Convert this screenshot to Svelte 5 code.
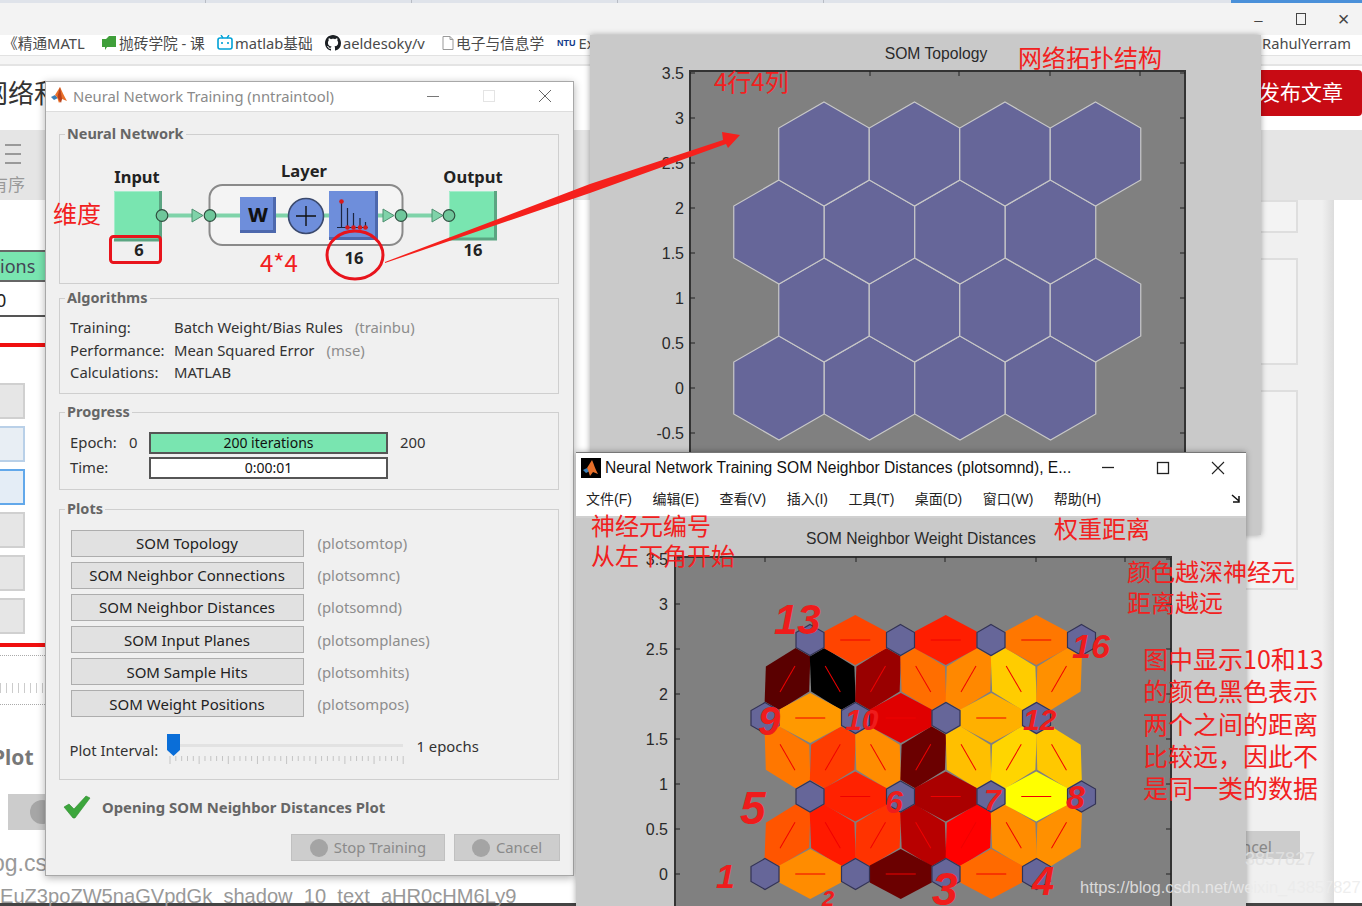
<script>
  const TOPO_ROWS = [
    { x: 779, y: 388 },
    { x: 824, y: 310 },
    { x: 779, y: 232 },
    { x: 824, y: 154 }
  ];
  const topoHexes = TOPO_ROWS.flatMap((r) => [0, 1, 2, 3].map((i) => ({ x: r.x + i * 90.5, y: r.y })));

  // neurons numbered from the lower left, as in plotsomnd
  const neurons = [
    { x: 765, y: 873 },
    { x: 810, y: 795.5 },
    { x: 765, y: 717 },
    { x: 810, y: 639 }
  ].flatMap((r) => [0, 1, 2, 3].map((i) => ({ x: r.x + i * 90.5, y: r.y })));

  const links = [
    [1, 5, '#ff5500'], [5, 2, '#ff1a00'], [2, 6, '#ff3300'], [6, 3, '#b80000'],
    [3, 7, '#ff0000'], [7, 4, '#ff8c00'], [4, 8, '#ff9000'],
    [9, 5, '#ff7700'], [5, 10, '#ff3c00'], [10, 6, '#ff8c00'], [6, 11, '#6b0000'],
    [11, 7, '#ffbf00'], [7, 12, '#ffd500'], [12, 8, '#ffc800'],
    [9, 13, '#5a0000'], [13, 10, '#000000'], [10, 14, '#990000'], [14, 11, '#ff6e00'],
    [11, 15, '#ff8800'], [15, 12, '#ffcc00'], [12, 16, '#ff9000'],
    [1, 2, '#ff8c00'], [2, 3, '#6b0000'], [3, 4, '#ff6a00'],
    [5, 6, '#ff2200'], [6, 7, '#aa0000'], [7, 8, '#ffff00'],
    [9, 10, '#ff9900'], [10, 11, '#e00000'], [11, 12, '#ffb000'],
    [13, 14, '#ff4400'], [14, 15, '#ff1e00'], [15, 16, '#ff7700']
  ].map(([a, b, color]) => {
    const p = neurons[a - 1];
    const q = neurons[b - 1];
    return {
      x: (p.x + q.x) / 2,
      y: (p.y + q.y) / 2,
      angle: (Math.atan2(q.y - p.y, q.x - p.x) * 180) / Math.PI,
      color
    };
  });

  const hex = (hw, hh, sh) =>
    `0,${-hh} ${hw},${-sh} ${hw},${sh} 0,${hh} ${-hw},${sh} ${-hw},${-sh}`;

  const topoTicks = ['3.5', '3', '2.5', '2', '1.5', '1', '0.5', '0', '-0.5'];
  const distTicks = ['3.5', '3', '2.5', '2', '1.5', '1', '0.5', '0'];

  const bookmarks = [
    { text: '《精通MATL', w: 98 },
    { icon: 'book', text: '抛砖学院 - 课', w: 116 },
    { icon: 'tv', text: 'matlab基础', w: 108 },
    { icon: 'git', text: 'aeldesoky/v', w: 117 },
    { icon: 'doc', text: '电子与信息学', w: 115 },
    { icon: 'ntu', text: 'Ex', w: 40 }
  ];

  const plots = [
    ['SOM Topology', 'plotsomtop'],
    ['SOM Neighbor Connections', 'plotsomnc'],
    ['SOM Neighbor Distances', 'plotsomnd'],
    ['SOM Input Planes', 'plotsomplanes'],
    ['SOM Sample Hits', 'plotsomhits'],
    ['SOM Weight Positions', 'plotsompos']
  ];

  const menu = ['文件(F)', '编辑(E)', '查看(V)', '插入(I)', '工具(T)', '桌面(D)', '窗口(W)', '帮助(H)'];

  const sliderTicks = Array.from({ length: 41 }, (_, i) => 170 + i * 5.83);

  const notes = [
    { x: 714, y: 91, t: '4行4列' },
    { x: 1018, y: 67, t: '网络拓扑结构' },
    { x: 53, y: 223, t: '维度' },
    { x: 260, y: 272, t: '4*4' },
    { x: 591, y: 535, t: '神经元编号' },
    { x: 591, y: 565, t: '从左下角开始' },
    { x: 1054, y: 538, t: '权重距离' },
    { x: 1127, y: 581, t: '颜色越深神经元' },
    { x: 1127, y: 612, t: '距离越远' }
  ];

  const bigNotes = [
    { x: 1143, y: 669, t: '图中显示10和13' },
    { x: 1143, y: 701, t: '的颜色黑色表示' },
    { x: 1143, y: 734, t: '两个之间的距离' },
    { x: 1143, y: 766, t: '比较远，因此不' },
    { x: 1143, y: 798, t: '是同一类的数据' }
  ];

  const scrawls = [
    { x: 774, y: 634, s: 42, t: '13' },
    { x: 1072, y: 658, s: 34, t: '16' },
    { x: 758, y: 735, s: 40, t: '9' },
    { x: 845, y: 730, s: 30, t: '10' },
    { x: 1023, y: 730, s: 30, t: '12' },
    { x: 740, y: 824, s: 46, t: '5' },
    { x: 885, y: 813, s: 32, t: '6' },
    { x: 984, y: 810, s: 30, t: '7' },
    { x: 1066, y: 809, s: 34, t: '8' },
    { x: 716, y: 888, s: 34, t: '1' },
    { x: 822, y: 906, s: 22, t: '2' },
    { x: 932, y: 905, s: 46, t: '3' },
    { x: 1032, y: 895, s: 40, t: '4' }
  ];
</script>

<div class="desktop">
  <div class="page">
    <div class="tabs"><span class="tab"></span><span class="tab"></span><span class="tab"></span><span class="tab"></span><span class="tab active"></span></div>
    <div class="chrome">
      <span class="ctl">–</span>
      <span class="ctl square"></span>
      <span class="ctl close">×</span>
    </div>
    <div class="bookmarks">
      {#each bookmarks as b}
        <span class="bookmark" style="width: {b.w}px">
          {#if b.icon === 'book'}
            <svg width="16" height="14" viewBox="0 0 16 14"><path d="M1 3h4l3-3h7v11H6l-2 3V11H1z" fill="#3f9f3a" /></svg>
          {:else if b.icon === 'tv'}
            <svg width="16" height="16" viewBox="0 0 16 16"><path d="M4 0l2 3M12 0l-2 3" stroke="#00a1d6" stroke-width="1.4" /><rect x="1" y="3" width="14" height="11" rx="2" fill="none" stroke="#00a1d6" stroke-width="1.6" /><path d="M5 7v2M11 7v2" stroke="#00a1d6" stroke-width="1.6" /></svg>
          {:else if b.icon === 'git'}
            <svg width="16" height="16" viewBox="0 0 16 16"><path fill="#1b1f23" d="M8 0C3.58 0 0 3.58 0 8c0 3.54 2.29 6.53 5.47 7.59.4.07.55-.17.55-.38 0-.19-.01-.82-.01-1.49-2.01.37-2.53-.49-2.69-.94-.09-.23-.48-.94-.82-1.13-.28-.15-.68-.52-.01-.53.63-.01 1.08.58 1.23.82.72 1.21 1.87.87 2.33.66.07-.52.28-.87.51-1.07-1.78-.2-3.64-.89-3.64-3.95 0-.87.31-1.59.82-2.15-.08-.2-.36-1.02.08-2.12 0 0 .67-.21 2.2.82.64-.18 1.32-.27 2-.27.68 0 1.36.09 2 .27 1.53-1.04 2.2-.82 2.2-.82.44 1.1.16 1.92.08 2.12.51.56.82 1.27.82 2.15 0 3.07-1.87 3.75-3.65 3.95.29.25.54.73.54 1.48 0 1.07-.01 1.93-.01 2.2 0 .21.15.46.55.38A8.013 8.013 0 0016 8c0-4.42-3.58-8-8-8z" /></svg>
          {:else if b.icon === 'doc'}
            <svg width="12" height="14" viewBox="0 0 12 14"><path d="M1 .5h7l3 3v10H1zM8 .5v3h3" fill="#fff" stroke="#999" /></svg>
          {:else if b.icon === 'ntu'}
            <span class="ntu">NTU</span>
          {/if}
          {b.text}
        </span>
      {/each}
      <span class="bookmark-end">RahulYerram</span>
    </div>
    <div class="strip"></div>
    <div class="head">
      <span class="head-title">网络和</span>
      <span class="publish">发布文章</span>
    </div>
    <div class="toolbar">
      <div class="hamburger"><i></i><i></i><i></i></div>
      <span class="sort">有序</span>
    </div>
    <div class="content">
      <div class="left">
        <div class="tab-green">ions</div>
        <div class="num">0</div>
        <div class="red-line first"></div>
        <div class="stub"></div>
        <div class="stub light"></div>
        <div class="stub focus"></div>
        <div class="stub"></div>
        <div class="stub"></div>
        <div class="stub"></div>
        <div class="red-line second"></div>
        <div class="scale"><div class="scale-ticks"></div></div>
        <div class="plot-word">Plot</div>
        <div class="stub-btn"></div>
        <div class="url-word">og.cs</div>
      </div>
      <div class="mid"></div>
      <div class="side">
        <div class="box b1"></div>
        <div class="box b2"></div>
        <div class="box b3"></div>
        <div class="ghost-cancel">ncel</div>
      </div>
      <div class="gutter"></div>
    </div>
    <div class="long-url">EuZ3poZW5naGVpdGk_shadow_10_text_aHR0cHM6Ly9</div>
    <div class="bottom"></div>
  </div>

  <!-- SOM Topology figure -->
  <div class="figure topo">
    <svg width="671" height="500" viewBox="590 35 671 500">
      <text class="fig-title" x="936" y="59" text-anchor="middle">SOM Topology</text>
      <rect x="690" y="71" width="495" height="440" fill="#808080" stroke="#333" stroke-width="2" />
      {#each topoTicks as t, i}
        <text class="tick" x="684" y={79 + i * 45} text-anchor="end">{t}</text>
        <path d="M690 {73 + i * 45}h5M1185 {73 + i * 45}h-5" stroke="#222" />
      {/each}
      {#each [870, 959, 1050, 1140] as x}
        <path d="M{x} 71v5" stroke="#222" />
      {/each}
      {#each topoHexes as h}
        <polygon transform="translate({h.x} {h.y})" points={hex(45.25, 52, 26)} fill="#666699" stroke="#c8c8c8" stroke-width="1.2" />
      {/each}
    </svg>
  </div>

  <!-- nntraintool -->
  <div class="tool">
    <div class="tool-title">
      <svg width="20" height="20" viewBox="0 0 20 20">
        <path d="M1 11l4-2 3 3-4 2z" fill="#3b7fb8" />
        <path d="M5 9l5-8c2 4 4 9 7 14l-5-2-3 4-2-6z" fill="#e8702a" />
        <path d="M10 1c-1 5-3 9-2 11l3 5 1-4z" fill="#b8401a" />
      </svg>
      <span class="tool-name">Neural Network Training (nntraintool)</span>
      <span class="win-btn min"></span>
      <span class="win-btn max"></span>
      <span class="win-btn x">
        <svg width="14" height="14" viewBox="0 0 14 14"><path d="M1 1l12 12M13 1L1 13" stroke="#666" /></svg>
      </span>
    </div>

    <div class="group net">
      <span class="legend">Neural Network</span>
      <svg class="diagram" width="500" height="150" viewBox="59 134 500 150">
        <text class="node-label" x="137" y="182.5" text-anchor="middle">Input</text>
        <text class="node-label" x="304" y="177" text-anchor="middle">Layer</text>
        <text class="node-label" x="473" y="182.5" text-anchor="middle">Output</text>

        <rect x="209.5" y="185" width="193" height="60" rx="13" fill="#f4f4f4" stroke="#8a8a8a" stroke-width="2" />

        <path d="M168 215.5h26M212 215.5h118M378 215.5h8M405 215.5h30" stroke="#7fd3a9" stroke-width="4" />

        <rect x="114" y="191" width="48" height="49" fill="#79e5b0" />
        <path d="M114.5 240V191.5H161" fill="none" stroke="#a5eccb" />
        <path d="M160.5 191v49H114" fill="none" stroke="#5ba582" stroke-width="3" />
        <rect x="449" y="191" width="48" height="49" fill="#79e5b0" />
        <path d="M449.5 240V191.5H496" fill="none" stroke="#a5eccb" />
        <path d="M495.5 191v48H449" fill="none" stroke="#5ba582" stroke-width="3" />

        <rect x="240" y="197" width="36" height="36" fill="#6e8edb" />
        <path d="M274.5 197v34.5H240" fill="none" stroke="#4d68ad" stroke-width="3" />
        <text class="w" x="258" y="222" text-anchor="middle">W</text>

        <circle cx="306" cy="216" r="17.5" fill="#6e8edb" stroke="#3b4a6e" stroke-width="1.6" />
        <path d="M296 216h20M306 206v20" stroke="#111" stroke-width="1.4" />

        <rect x="329" y="191" width="49" height="49" fill="#6e8edb" />
        <path d="M376.5 191v47.5H329" fill="none" stroke="#4d68ad" stroke-width="3" />
        <path d="M341.5 202v26M347.5 208v20M353.5 213v15M360 218v10M365.5 222v6M337 227.5h31" stroke="#1c2540" stroke-width="1.2" />
        <circle cx="341.5" cy="201.5" r="2.3" fill="#d91a1a" />
        {#each [347.5, 353.5, 360, 365.5] as x}
          <circle cx={x} cy="227.5" r="2.3" fill="#d91a1a" />
        {/each}

        {#each [192, 383, 432] as x}
          <path d="M{x} 209l11 6.5-11 6.5z" fill="#7fd3a9" stroke="#4f8f70" />
        {/each}
        {#each [162, 210, 401, 449] as x}
          <circle cx={x} cy="215.5" r="5.8" fill="#6fc79b" stroke="#2f4f40" stroke-width="1.2" />
        {/each}

        <text class="size" x="139" y="256" text-anchor="middle">6</text>
        <text class="size" x="354" y="264" text-anchor="middle">16</text>
        <text class="size" x="473" y="256" text-anchor="middle">16</text>
      </svg>
    </div>

    <div class="group alg">
      <span class="legend">Algorithms</span>
      <div class="alg-row"><span>Training:</span><span>Batch Weight/Bias Rules<em>(trainbu)</em></span></div>
      <div class="alg-row"><span>Performance:</span><span>Mean Squared Error<em>(mse)</em></span></div>
      <div class="alg-row"><span>Calculations:</span><span>MATLAB</span></div>
    </div>

    <div class="group prog">
      <span class="legend">Progress</span>
      <div class="prog-row">
        <span>Epoch:</span><span>0</span>
        <div class="bar filled">200 iterations</div>
        <span class="prog-end">200</span>
      </div>
      <div class="prog-row">
        <span>Time:</span><span></span>
        <div class="bar">0:00:01</div>
      </div>
    </div>

    <div class="group plots">
      <span class="legend">Plots</span>
      <div class="plot-list">
        {#each plots as [label, fn]}
          <div class="plot-row">
            <button class="plot-btn">{label}</button>
            <span class="hint">({fn})</span>
          </div>
        {/each}
      </div>
      <div class="interval">
        <span class="interval-label">Plot Interval:</span>
        <svg width="238" height="34" viewBox="167 733 238 34">
          <rect x="170" y="745" width="233" height="3" fill="#e2e2e2" />
          {#each sliderTicks as x, i}
            <path d="M{x} 757v{i % 5 === 0 ? 8 : 5}" stroke="#c4c4c4" />
          {/each}
          <path d="M167 735h13v16l-6.500 6-6.500-6z" fill="#0a6ed8" />
        </svg>
        <span class="epochs">1 epochs</span>
      </div>
    </div>

    <div class="status">
      <svg width="28" height="24" viewBox="0 0 28 24">
        <path d="M1 12l5-3 5 5L23 1l4 2-15 20h-2z" fill="#3ca63c" stroke="#2e8a2e" stroke-width=".6" />
      </svg>
      <span>Opening SOM Neighbor Distances Plot</span>
    </div>

    <div class="actions">
      <button class="action stop"><i class="dot"></i><span>Stop Training</span></button>
      <button class="action cancel"><i class="dot"></i><span>Cancel</span></button>
    </div>
  </div>

  <!-- SOM Neighbor Distances figure -->
  <div class="figure dist">
    <div class="dist-title">
      <svg width="20" height="20" viewBox="0 0 20 20">
        <rect width="20" height="20" fill="#000" />
        <path d="M2 12l4-2 3 3-4 2z" fill="#3b7fb8" />
        <path d="M6 10l5-8c2 4 3 9 6 14l-5-2-3 4-2-6z" fill="#e8702a" />
      </svg>
      <span class="dist-name">Neural Network Training SOM Neighbor Distances (plotsomnd), E...</span>
      <span class="dist-btn">
        <svg width="14" height="14" viewBox="0 0 14 14"><path d="M1 6.500h12" stroke="#222" stroke-width="1.300" /></svg>
      </span>
      <span class="dist-btn">
        <svg width="14" height="14" viewBox="0 0 14 14"><rect x="1.500" y="1.500" width="11" height="11" fill="none" stroke="#222" stroke-width="1.300" /></svg>
      </span>
      <span class="dist-btn">
        <svg width="14" height="14" viewBox="0 0 14 14"><path d="M1 1l12 12M13 1L1 13" stroke="#222" stroke-width="1.100" /></svg>
      </span>
    </div>
    <div class="menubar">
      {#each menu as m}<span>{m}</span>{/each}
      <svg class="dock" width="10" height="10" viewBox="0 0 10 10"><path d="M1 1l7 6M8 2v6H2" fill="none" stroke="#111" stroke-width="1.500" /></svg>
    </div>
    <svg class="dist-plot" width="670" height="390" viewBox="576 516 670 390">
      <text class="fig-title" x="921" y="543" text-anchor="middle">SOM Neighbor Weight Distances</text>
      <rect x="675" y="556" width="496" height="360" fill="#808080" stroke="#333" stroke-width="2" />
      {#each distTicks as t, i}
        <text class="tick" x="668" y={564 + i * 45} text-anchor="end">{t}</text>
        <path d="M675 {558 + i * 45}h5M1171 {558 + i * 45}h-5" stroke="#222" />
      {/each}
      {#each [765, 856, 945, 1036, 1125] as x}
        <path d="M{x} 556v5" stroke="#222" />
      {/each}
      {#each links as l}
        <g transform="translate({l.x} {l.y}) rotate({l.angle})">
          <polygon points={hex(31, 25, 8.5)} fill={l.color} />
          <line x1="-15" x2="15" stroke="#f00000" />
        </g>
      {/each}
      {#each neurons as n}
        <polygon transform="translate({n.x} {n.y})" points={hex(14, 15.5, 7.5)} fill="#666699" stroke="#333355" stroke-width="1.200" />
      {/each}
    </svg>
  </div>

  <!-- red notes drawn over the screenshot -->
  <svg class="overlay" width="1362" height="906" viewBox="0 0 1362 906">
    <polygon points="385,262 590,184 723,140 722,132 740,135 728,148 726,144 590,193 385,263" fill="#f5201c" />
    <rect x="110.500" y="236.500" width="50" height="26" rx="3" fill="none" stroke="#e8141c" stroke-width="3" />
    <ellipse cx="355" cy="255" rx="28" ry="24" fill="none" stroke="#e8141c" stroke-width="3" />
    {#each notes as n}
      <text class="note" x={n.x} y={n.y}>{n.t}</text>
    {/each}
    {#each bigNotes as n}
      <text class="note big" x={n.x} y={n.y}>{n.t}</text>
    {/each}
    {#each scrawls as s}
      <text class="scrawl" x={s.x} y={s.y} font-size={s.s}>{s.t}</text>
    {/each}
    <text class="mark faint" x="1245" y="865">3857827</text>
    <text class="mark" x="1080" y="893">https://blog.csdn.net/weixin_43857827</text>
  </svg>
</div>

<style>
  :global(body) {
    margin: 0;
    background: #fff;
  }

  .desktop {
    position: relative;
    width: 1362px;
    height: 906px;
    overflow: hidden;
    font-family: "Noto Sans", "Noto Sans CJK SC", sans-serif;
    color: #222;
  }

  /* browser behind the windows */
  .page {
    display: flex;
    flex-direction: column;
    height: 906px;
    background: #fff;
  }

  .tabs {
    display: flex;
    height: 3px;
    background: #dfe3ea;
  }

  .tab {
    width: 205px;
    border-right: 1px solid #b8bcc4;
  }

  .tab.active {
    margin-left: auto;
    width: 131px;
    border: 0;
    background: #4a90d9;
  }

  .chrome {
    display: flex;
    justify-content: flex-end;
    align-items: center;
    gap: 29px;
    height: 32px;
    padding-right: 12px;
    background: #f3f3f3;
  }

  .ctl {
    width: 13px;
    text-align: center;
    font: 15px/1 "Liberation Sans", sans-serif;
    color: #444;
  }

  .ctl.square {
    width: 8px;
    height: 10px;
    border: 1.500px solid #444;
    margin: 0 2px;
  }

  .ctl.close {
    font-size: 20px;
  }

  .bookmarks {
    display: flex;
    align-items: center;
    box-sizing: border-box;
    height: 21px;
    padding: 0 0 5px 3px;
    border-bottom: 1px solid #e2e2e2;
    font-size: 14.700px;
    color: #4a4a4a;
    white-space: nowrap;
  }

  .bookmark {
    display: flex;
    align-items: center;
    gap: 2px;
    overflow: hidden;
  }

  .ntu {
    font: bold 9px "Liberation Sans", sans-serif;
    color: #123a8a;
    margin-right: 1px;
  }

  .bookmark-end {
    margin-left: auto;
    padding-right: 11px;
  }

  .strip {
    height: 8px;
    background: #f5f5f5;
    border-bottom: 2px solid #e4e4e4;
  }

  .head {
    display: flex;
    justify-content: space-between;
    align-items: flex-start;
    height: 64px;
    background: #fff;
  }

  .head-title {
    margin: 5px 0 0 -18px;
    font-size: 26px;
    line-height: 44px;
    color: #333;
  }

  .publish {
    box-sizing: border-box;
    width: 122px;
    height: 46px;
    margin-top: 4px;
    padding-left: 19px;
    background: #c80b14;
    border-radius: 4px;
    color: #fff;
    font-size: 21px;
    line-height: 45px;
  }

  .toolbar {
    box-sizing: border-box;
    height: 70px;
    padding: 14px 0 0 5px;
    background: #e5e5e5;
  }

  .hamburger i {
    display: block;
    width: 16px;
    height: 2px;
    margin-bottom: 7px;
    background: #999;
  }

  .sort {
    display: block;
    margin: 3px 0 0 -14px;
    font-size: 17px;
    color: #999;
  }

  .content {
    flex: 1;
    display: flex;
    min-height: 0;
  }

  .left {
    width: 45px;
    overflow: hidden;
    background: #fff;
  }

  .tab-green {
    margin-top: 50px;
    height: 28px;
    border-top: 2px solid #666;
    border-bottom: 2px solid #666;
    background: #79e5b0;
    color: #445;
    font-size: 18px;
    line-height: 28px;
  }

  .num {
    height: 30px;
    margin-top: 3px;
    border-bottom: 2px solid #555;
    font-size: 18px;
    line-height: 30px;
    margin-left: -4px;
  }

  .red-line {
    height: 4px;
    background: #f01010;
  }

  .red-line.first {
    margin: 26px 0 36px;
  }

  .red-line.second {
    margin-top: 9px;
  }

  .stub {
    box-sizing: border-box;
    width: 25px;
    height: 36px;
    margin-bottom: 7px;
    border: 2px solid #d0d0d0;
    border-left: 0;
    background: #e6e6e6;
  }

  .stub.light {
    border-color: #b9d0e8;
    background: #e8eef4;
  }

  .stub.focus {
    border-color: #62a8ea;
    background: #e4edf6;
  }

  .scale {
    box-sizing: border-box;
    height: 50px;
    margin-top: 8px;
    padding-top: 27px;
    border-top: 1px dotted #aaa;
    border-bottom: 1px dotted #aaa;
  }

  .scale-ticks {
    height: 10px;
    background: repeating-linear-gradient(90deg, #ccc 0 1px, transparent 1px 6px);
  }

  .plot-word {
    margin: 39px 0 0 -8px;
    font: bold 21px/26px "Noto Sans", sans-serif;
    color: #777;
  }

  .stub-btn {
    position: relative;
    width: 37px;
    height: 36px;
    margin: 24px 0 18px 8px;
    background: #ccc;
    overflow: hidden;
  }

  .stub-btn::after {
    content: "";
    position: absolute;
    left: 22px;
    top: 6px;
    width: 24px;
    height: 24px;
    border-radius: 50%;
    background: #a6a6a6;
  }

  .url-word {
    font: 23px/30px "Liberation Sans", sans-serif;
    color: #999;
    margin-left: -8px;
  }

  .mid {
    flex: 1;
  }

  .side {
    box-sizing: border-box;
    width: 222px;
    padding-top: 0;
    background: #f0f0f0;
  }

  .box {
    width: 198px;
    background: #f3f3f3;
    border: 2px solid #dedede;
    border-left: 0;
    box-sizing: border-box;
  }

  .b1 { height: 33px; }
  .b2 { height: 107px; margin-top: 25px; }
  .b3 { height: 200px; margin-top: 25px; }

  .ghost-cancel {
    box-sizing: border-box;
    width: 200px;
    height: 28px;
    margin-top: 241px;
    padding-right: 28px;
    background: #ccc;
    color: #888;
    text-align: right;
    font-size: 16px;
    line-height: 32px;
  }

  .gutter {
    width: 12px;
    margin-right: 28px;
    background: linear-gradient(90deg, #f0f0f0, #dcdcdc);
  }

  .long-url {
    position: absolute;
    left: 0;
    top: 884px;
    width: 530px;
    overflow: hidden;
    white-space: nowrap;
    font: 20.100px/24px "Liberation Sans", sans-serif;
    color: #999;
  }

  .bottom {
    height: 3px;
    background: #444;
  }

  /* matlab figures */
  .figure {
    position: absolute;
    background: #c9c9c9;
    box-shadow: 0 0 6px rgba(0, 0, 0, 0.35);
  }

  .figure svg {
    display: block;
  }

  .topo {
    left: 590px;
    top: 35px;
    width: 671px;
    height: 500px;
  }

  .fig-title,
  .tick {
    font-family: "Liberation Sans", sans-serif;
    fill: #2a2a2a;
  }

  .fig-title {
    font-size: 15.700px;
  }

  .tick {
    font-size: 16px;
  }

  .dist {
    left: 576px;
    top: 452px;
    width: 670px;
    height: 454px;
    border-top: 1px solid #777;
    box-sizing: border-box;
  }

  .dist-title {
    display: flex;
    align-items: center;
    box-sizing: border-box;
    height: 30px;
    padding: 0 0 0 5px;
    background: #fff;
  }

  .dist-name {
    flex: 1;
    margin-left: 4px;
    font: 15.600px "Liberation Sans", sans-serif;
    color: #111;
    white-space: nowrap;
  }

  .dist-btn {
    display: flex;
    justify-content: center;
    width: 56px;
    margin-left: -1px;
  }

  .dist-btn svg {
    display: block;
  }

  .menubar {
    display: flex;
    align-items: center;
    gap: 20.500px;
    position: relative;
    box-sizing: content-box;
    height: 29px;
    padding: 0 0 4px 10px;
    background: #fff;
    border-bottom: 2px solid #d0d0d0;
    font: 14px "Liberation Sans", "Noto Sans CJK SC", sans-serif;
    color: #222;
  }

  .dock {
    position: absolute;
    right: 5px;
    top: 11px;
  }

  .dist-plot {
    margin-top: -1px;
  }

  /* nntraintool */
  .tool {
    position: absolute;
    left: 45px;
    top: 81px;
    box-sizing: border-box;
    width: 529px;
    height: 795px;
    background: #f0f0f0;
    border: 1px solid #a8a8a8;
    box-shadow: 0 2px 8px rgba(0, 0, 0, 0.3);
    font-size: 14.850px;
    color: #333;
  }

  .tool-title {
    display: flex;
    align-items: center;
    box-sizing: border-box;
    height: 30px;
    padding: 0 0 1px 4px;
    background: #fff;
    border-bottom: 1px solid #ddd;
  }

  .tool-name {
    flex: 1;
    margin-left: 3px;
    color: #8a8a8a;
    white-space: nowrap;
    font-size: 14.800px;
  }

  .win-btn {
    display: flex;
    justify-content: center;
    align-items: center;
    width: 56px;
  }

  .win-btn.min::before {
    content: "";
    width: 12px;
    height: 1px;
    background: #777;
  }

  .win-btn.max::before {
    content: "";
    width: 10px;
    height: 10px;
    border: 1px solid #e4e4e4;
  }

  .win-btn.x svg {
    display: block;
  }

  .group {
    position: relative;
    box-sizing: border-box;
    width: 500px;
    margin-left: 13px;
    border: 1.500px solid #cfcfcf;
  }

  .legend {
    position: absolute;
    left: 5px;
    top: -12px;
    padding: 0 2px;
    background: #f0f0f0;
    font-weight: 700;
    font-size: 14.500px;
    line-height: 20px;
    color: #666;
  }

  .net {
    height: 150px;
    margin-top: 22px;
  }

  .diagram {
    display: block;
    margin: -1.500px;
  }

  .node-label,
  .size {
    font-family: "Noto Sans", sans-serif;
    font-weight: 700;
    font-size: 16.500px;
    fill: #222;
  }

  .w {
    font-family: "Noto Sans", sans-serif;
    font-weight: 800;
    font-size: 20px;
    fill: #111;
  }

  .alg {
    height: 96px;
    margin-top: 14px;
    padding: 17px 0 0 10px;
  }

  .alg-row {
    display: grid;
    grid-template-columns: 104px 1fr;
    line-height: 22.500px;
  }

  .alg-row em {
    margin-left: 12px;
    font-style: normal;
    color: #8d8d8d;
  }

  .prog {
    height: 78px;
    margin-top: 18px;
    padding: 19px 0 0 10px;
  }

  .prog-row {
    display: grid;
    grid-template-columns: 59px 20px 239px auto;
    align-items: center;
    height: 22px;
    margin-bottom: 3px;
  }

  .prog-row > span {
    margin-bottom: 2px;
  }

  .bar {
    box-sizing: border-box;
    height: 22px;
    border: 2px solid #555;
    background: #fff;
    text-align: center;
    font-size: 14px;
    line-height: 17px;
    color: #111;
  }

  .bar.filled {
    background: #79e5b0;
  }

  .prog-end {
    margin-left: 12px;
  }

  .plots {
    height: 271px;
    margin-top: 19px;
    padding: 19.500px 0 0 10.500px;
  }

  .plot-list {
    display: flex;
    flex-direction: column;
    gap: 5.200px;
  }

  .plot-row {
    display: flex;
    align-items: center;
    gap: 14px;
  }

  .plot-btn {
    width: 233px;
    height: 27px;
    padding: 0;
    background: #e1e1e1;
    border: 1.500px solid #adadad;
    border-radius: 0;
    font: inherit;
    font-size: 15px;
    color: #222;
  }

  .hint {
    color: #8d8d8d;
  }

  .interval {
    display: flex;
    align-items: flex-start;
    margin: 15px 0 0 -1px;
  }

  .interval svg {
    display: block;
    margin-left: 9px;
  }

  .interval-label {
    margin-top: 8px;
    width: 88px;
    white-space: nowrap;
  }

  .epochs {
    margin: 4px 0 0 12px;
  }

  .status {
    display: flex;
    align-items: center;
    gap: 11px;
    margin: 15px 0 0 17px;
    font-weight: 700;
    color: #666;
  }

  .status svg {
    display: block;
  }

  .actions {
    display: flex;
    justify-content: flex-end;
    gap: 9px;
    margin: 15px 13px 0 0;
  }

  .action {
    display: flex;
    align-items: center;
    justify-content: center;
    gap: 6px;
    height: 27px;
    padding: 0;
    border: 1px solid #c0c0c0;
    border-radius: 0;
    background: #cdcdcd;
    font: inherit;
    color: #8a8a8a;
  }

  .action span {
    margin-bottom: 1px;
  }

  .stop {
    width: 154px;
  }

  .cancel {
    width: 106px;
  }

  .dot {
    width: 18px;
    height: 18px;
    border-radius: 50%;
    background: #a4a4a4;
  }

  /* annotations */
  .overlay {
    position: absolute;
    left: 0;
    top: 0;
    pointer-events: none;
  }

  .note {
    font-family: "Noto Sans CJK SC", sans-serif;
    font-size: 24px;
    fill: #f22020;
  }

  .note.big {
    font-size: 25px;
  }

  .scrawl {
    font-family: "Liberation Sans", sans-serif;
    font-style: italic;
    font-weight: 700;
    fill: #ef1c1c;
  }

  .mark {
    font-family: "Liberation Sans", sans-serif;
    font-size: 16.500px;
    fill: rgba(235, 235, 235, 0.85);
  }

  .mark.faint {
    font-size: 18px;
    fill: rgba(225, 225, 225, 0.9);
  }
</style>
